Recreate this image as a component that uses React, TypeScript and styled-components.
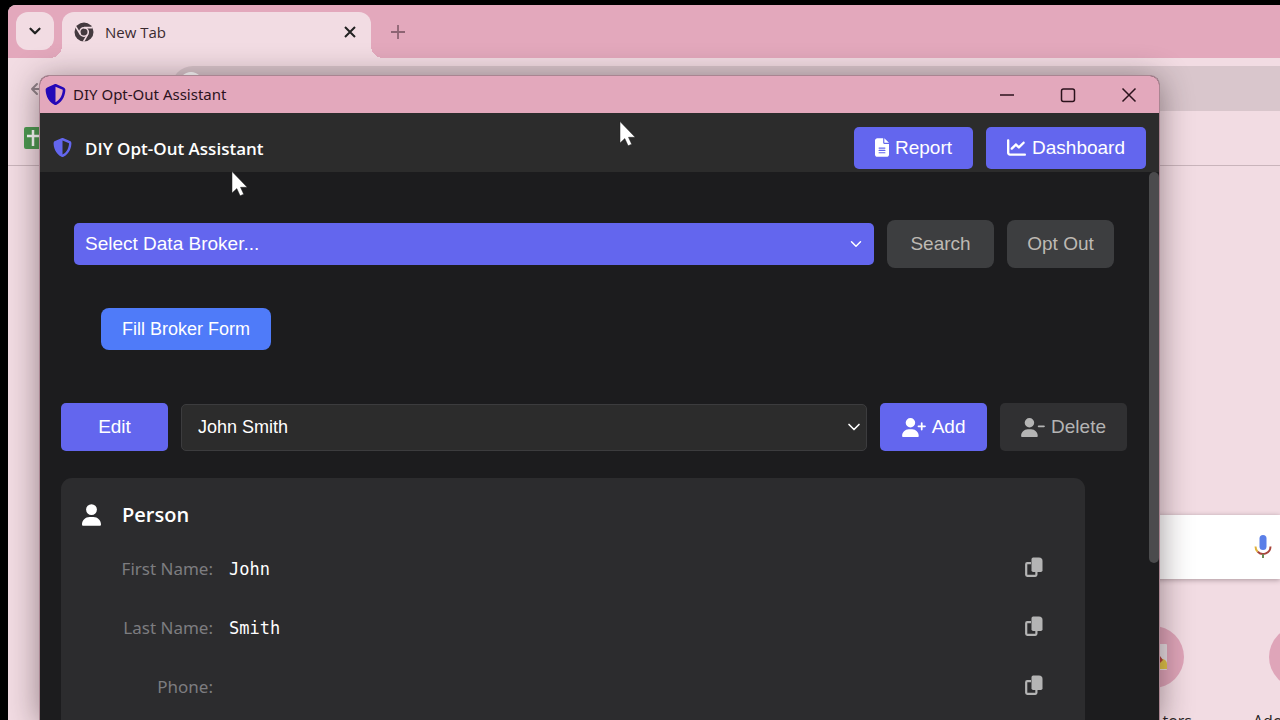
import React from "react";
import styled, { createGlobalStyle } from "styled-components";
import {
  FaArrowLeft,
  FaChartLine,
  FaFileLines,
  FaShieldHalved,
  FaUser,
  FaUserMinus,
  FaUserPlus,
} from "react-icons/fa6";
import { ChevronDown } from "lucide-react";

const uiFont = `"Segoe UI", "Open Sans", "Noto Sans", sans-serif`;
const labelFont = `"Segoe UI", "Noto Sans", "Open Sans", sans-serif`;
const controlFont = `Arial, "Liberation Sans", sans-serif`;
const monoFont = `Consolas, "DejaVu Sans Mono", monospace`;

const GlobalStyle = createGlobalStyle`
  *, *::before, *::after { box-sizing: border-box; }
  body { margin: 0; background: #000; font-family: ${uiFont}; overflow: hidden; }
  button, select { font: inherit; }
  h1, h2, dl, dd { margin: 0; }
`;

const Desktop = styled.div`
  position: relative;
  height: 100vh;
  background: #000;
  overflow: hidden;
`;

/* ---------- browser behind ---------- */

const BrowserWindow = styled.section`
  position: absolute;
  inset: 5px 0 0 8px;
  display: flex;
  flex-direction: column;
  background: #f2dce3;
  border-radius: 8px 0 0 0;
  overflow: hidden;
`;

const TabStrip = styled.div`
  display: flex;
  align-items: flex-end;
  height: 53px;
  flex: none;
  padding-left: 8px;
  background: #e3a8bc;
`;

const TabSearch = styled.button`
  display: grid;
  place-items: center;
  width: 38px;
  height: 38px;
  margin-bottom: 8px;
  padding: 0;
  border: 0;
  border-radius: 12px;
  background: #f2dce3;
  color: #222;
`;

const Tab = styled.div`
  position: relative;
  display: flex;
  align-items: center;
  gap: 11px;
  width: 309px;
  height: 46px;
  margin-left: 8px;
  padding: 0 12px 6px;
  border-radius: 12px 12px 0 0;
  background: #f2dce3;
  color: #3a2a30;
  font-size: 15px;
  line-height: 20px;

  &::before,
  &::after {
    content: "";
    position: absolute;
    bottom: 0;
    width: 12px;
    height: 12px;
  }
  &::before {
    right: 100%;
    background: radial-gradient(circle at 0 0, #e3a8bc 12px, #f2dce3 12px);
  }
  &::after {
    left: 100%;
    background: radial-gradient(circle at 100% 0, #e3a8bc 12px, #f2dce3 12px);
  }
`;

const TabLabel = styled.span`
  flex: 1;
`;

const BareButton = styled.button`
  display: grid;
  place-items: center;
  padding: 0;
  border: 0;
  background: none;
  color: inherit;
`;

const NewTab = styled(BareButton)`
  height: 53px;
  margin-left: 19px;
  color: #8d6473;
`;

const Toolbar = styled.div`
  display: flex;
  align-items: flex-start;
  height: 53px;
  flex: none;
  padding: 8px 0 0 22px;
  color: #8f8288;
`;

const BackButton = styled(BareButton)`
  width: 16px;
  margin: 15px 125px 0 0;
`;

const Omnibox = styled.div`
  flex: 1;
  height: 45px;
  padding: 6px 8px;
  border-radius: 22px 0 0 22px;
  background: #d9c6cc;
`;

const OmniboxBadge = styled.div`
  width: 24px;
  height: 24px;
  border-radius: 50%;
  background: #fff;
`;

const BookmarkBar = styled.div`
  display: flex;
  align-items: center;
  height: 55px;
  flex: none;
  padding-left: 16px;
  border-bottom: 1px solid #c9b4bb;
`;

const NewTabPage = styled.div`
  display: flex;
  flex-direction: column;
  align-items: flex-end;
  padding-top: 349px;
`;

const SearchBox = styled.div`
  display: flex;
  align-items: center;
  justify-content: flex-end;
  width: 60%;
  height: 64px;
  flex: none;
  padding-right: 8px;
  background: #fff;
  box-shadow: 0 1px 5px rgba(60, 40, 48, 0.4);
`;

const Shortcuts = styled.div`
  display: flex;
  gap: 85px;
  margin: 47px -51px 0 0;
`;

const Shortcut = styled.a`
  display: flex;
  flex-direction: column;
  gap: 23px;
  width: 62px;
  color: #2a1f24;
  font-size: 16px;
  line-height: 20px;
  text-decoration: none;
  white-space: nowrap;
`;

const ShortcutDisc = styled.span`
  display: grid;
  place-items: center;
  width: 62px;
  height: 62px;
  border-radius: 50%;
  background: #dfa5b9;
`;

const ShortcutLabel = styled.span<{ $side: "start" | "end" }>`
  align-self: ${(p) => (p.$side === "end" ? "flex-end" : "flex-start")};
  margin: 0 ${(p) => (p.$side === "end" ? "-8px" : "0")} 0
    ${(p) => (p.$side === "end" ? "0" : "-16px")};
`;

/* ---------- assistant window ---------- */

const AppWindow = styled.section`
  position: absolute;
  inset: 75px 120px 0 39px;
  display: flex;
  flex-direction: column;
  border: solid #a98591;
  border-width: 1px 1px 0;
  border-radius: 10px 10px 0 0;
  background: #1c1c1e;
  box-shadow: 0 4px 32px rgba(30, 15, 20, 0.45);
  overflow: hidden;
`;

const TitleBar = styled.div`
  display: flex;
  align-items: center;
  gap: 7px;
  height: 37px;
  flex: none;
  padding: 0 20px 0 5px;
  background: #e3a8bc;
  color: #2b121c;
  font-family: ${labelFont};
  font-size: 15px;
  line-height: 20px;
`;

const WindowTitle = styled.span`
  flex: 1;
  padding-bottom: 2px;
`;

const WindowButtons = styled.div`
  display: flex;
  gap: 41px;
`;

const Header = styled.header`
  display: flex;
  align-items: center;
  gap: 13px;
  height: 59px;
  flex: none;
  padding: 10px 13px 0;
  background: #2c2c2c;
  color: #fff;
`;

const Brand = styled.h1`
  flex: 1;
  padding-top: 2px;
  font-size: 17px;
  line-height: 24px;
  font-weight: 600;
`;

type Tone = "primary" | "bright" | "muted" | "dim";

const tones: Record<Tone, string> = {
  primary: "background: #6366ee; color: #fff;",
  bright: "background: #4f7bf9; color: #fff;",
  muted: "background: #3d3e40; color: #bdb9b3;",
  dim: "background: #303032; color: #b4b4b4;",
};

const Button = styled.button<{
  $tone: Tone;
  $tall?: boolean;
  $round?: boolean;
  $iconWidth?: number;
}>`
  display: inline-flex;
  align-items: center;
  justify-content: center;
  gap: 6px;
  flex: none;
  height: ${(p) => (p.$tall ? 48 : 42)}px;
  min-width: 107px;
  padding: 0 ${(p) => (p.$iconWidth ? 21 : 20)}px;
  border: 0;
  border-radius: ${(p) => (p.$round ? 8 : 5)}px;
  font-family: ${controlFont};
  font-size: ${(p) => (p.$tone === "bright" ? 18 : 19)}px;
  line-height: 24px;
  white-space: nowrap;
  ${(p) => tones[p.$tone]}

  svg {
    width: ${(p) => p.$iconWidth ?? 19}px;
    height: 19px;
  }
`;

const Body = styled.div`
  display: flex;
  flex: 1;
  min-height: 0;
`;

const Content = styled.main`
  flex: 1;
  min-width: 0;
  padding: 48px 22px 0 21px;
`;

const ScrollTrack = styled.div`
  width: 10px;
  flex: none;
`;

const ScrollThumb = styled.div`
  height: 391px;
  border-radius: 5px;
  background: #4b4b4d;
`;

const BrokerRow = styled.div`
  display: flex;
  align-items: center;
  gap: 13px;
  padding: 0 13px;
`;

const FillRow = styled.div`
  padding: 40px 0 53px 40px;
  display: flex;
`;

const ProfileRow = styled.div`
  display: flex;
  align-items: center;
  gap: 13px;
`;

const SelectWrap = styled.div<{ $inset: number }>`
  position: relative;
  flex: 1;
  color: #fff;
  svg {
    position: absolute;
    right: ${(p) => p.$inset}px;
    top: 0;
    bottom: 0;
    margin: auto 0;
    pointer-events: none;
  }
`;

const Select = styled.select<{ $filled?: boolean }>`
  display: block;
  width: 100%;
  height: ${(p) => (p.$filled ? 42 : 47)}px;
  padding: 0 ${(p) => (p.$filled ? 11 : 16)}px;
  appearance: none;
  border: ${(p) => (p.$filled ? "0" : "1px solid #3c3c3e")};
  border-radius: 5px;
  background: ${(p) => (p.$filled ? "#6366ee" : "#2c2c2c")};
  color: #fff;
  font-family: ${controlFont};
  font-size: ${(p) => (p.$filled ? 19 : 18)}px;
  line-height: 24px;
`;

const Card = styled.section`
  margin: 27px 42px 0 0;
  padding: 22px 42px 40px 21px;
  border-radius: 11px;
  background: #2c2c2e;
`;

const CardTitle = styled.h2`
  display: flex;
  align-items: center;
  gap: 21px;
  color: #fff;
  font-size: 20px;
  line-height: 30px;
  font-weight: 600;

  svg {
    width: 19px;
    height: 22px;
  }
`;

const Fields = styled.dl`
  padding-top: 9px;
`;

const Field = styled.div`
  display: flex;
  align-items: center;
  height: 59px;
`;

const FieldName = styled.dt`
  width: 131px;
  margin-right: 16px;
  color: #7d7d80;
  font-family: ${labelFont};
  font-size: 17px;
  line-height: 24px;
  text-align: right;
  white-space: nowrap;
`;

const FieldValue = styled.dd`
  flex: 1;
  color: #fff;
  font-family: ${monoFont};
  font-size: 17px;
  line-height: 24px;
`;

const CopyButton = styled(BareButton)`
  margin-bottom: 4px;
  color: #b4b4b4;
`;

const Pointer = styled.svg<{ $x: number; $y: number }>`
  position: absolute;
  left: ${(p) => p.$x}px;
  top: ${(p) => p.$y}px;
  pointer-events: none;
`;

const ChromeMark = () => (
  <svg width="20" height="20" viewBox="0 0 20 20" aria-hidden="true">
    <circle cx="10" cy="10" r="9.5" fill="#443a3f" />
    <circle cx="10" cy="10" r="4.3" fill="none" stroke="#f2dce3" strokeWidth="1.6" />
    <path d="M10 5.6H18.6M6.2 12.2 1.9 4.8M13.8 12.2 9.5 19.6" stroke="#f2dce3" strokeWidth="1.6" />
  </svg>
);

const CopyIcon = () => (
  <svg width="18" height="20" viewBox="0 0 18 20" aria-hidden="true">
    <path d="M6 6.2H2.2a1 1 0 0 0-1 1v10.6a1 1 0 0 0 1 1h8.2a1 1 0 0 0 1-1V14.5" fill="none" stroke="currentColor" strokeWidth="2.2" />
    <path d="M8.200.5h5.800a3.500 3.500 0 0 1 3.500 3.500v9.300a1.700 1.700 0 0 1-1.700 1.700H8.200a1.700 1.700 0 0 1-1.700-1.700V2.200A1.700 1.700 0 0 1 8.200.5z" fill="currentColor" />
  </svg>
);

const MicIcon = () => (
  <svg width="18" height="26" viewBox="0 0 18 26" aria-hidden="true">
    <rect x="5.500" y="1" width="7" height="15" rx="3.500" fill="#5b7fe8" />
    <path d="M1.500 12.500a7.500 7.500 0 0 0 2.200 5.300" fill="none" stroke="#e0b23c" strokeWidth="2" />
    <path d="M3.700 17.800a7.500 7.500 0 0 0 12.800-5.300" fill="none" stroke="#a8453c" strokeWidth="2" />
    <path d="M9 20v4" stroke="#6d8b55" strokeWidth="2" />
  </svg>
);

const SheetIcon = () => (
  <svg width="22" height="22" viewBox="0 0 22 22" aria-hidden="true">
    <rect width="22" height="22" rx="2" fill="#4c9a51" />
    <path d="M9 3v16M3 9h16" stroke="#fff" strokeWidth="2.500" />
  </svg>
);

const StoreIcon = () => (
  <svg width="32" height="32" viewBox="0 0 32 32" aria-hidden="true">
    <rect x="4" y="3" width="26" height="26" rx="1" fill="#e8dfe3" />
    <path d="M4 18h21a5 5 0 0 1 5 5v5H4z" fill="#e2c548" />
    <path d="M4 15h19l3 4-3 3H4z" fill="#b3433a" />
  </svg>
);

const CursorArrow = ({ x, y }: { x: number; y: number }) => (
  <Pointer $x={x} $y={y} width="18" height="26" viewBox="0 0 18 26" aria-hidden="true">
    <path d="M1 .5v21.500l4.800-4.400 3.300 7.200 3.600-1.600-3.200-6.900h6.700z" fill="#fff" stroke="#222" strokeWidth="0.500" />
  </Pointer>
);

const fields = [
  { name: "First Name:", value: "John" },
  { name: "Last Name:", value: "Smith" },
  { name: "Phone:", value: "" },
];

export default function App() {
  return (
    <Desktop>
      <GlobalStyle />
      <BrowserWindow aria-label="Browser">
        <TabStrip>
          <TabSearch aria-label="Search tabs">
            <ChevronDown size={18} strokeWidth={3} />
          </TabSearch>
          <Tab>
            <ChromeMark />
            <TabLabel>New Tab</TabLabel>
            <BareButton aria-label="Close tab">
              <svg width="18" height="18" viewBox="0 0 18 18">
                <path d="M4 4l10 10M14 4l-10 10" stroke="#222" strokeWidth="2" />
              </svg>
            </BareButton>
          </Tab>
          <NewTab aria-label="New tab">
            <svg width="16" height="16" viewBox="0 0 16 16">
              <path d="M8 1v14M1 8h14" stroke="currentColor" strokeWidth="1.800" />
            </svg>
          </NewTab>
        </TabStrip>
        <Toolbar>
          <BackButton aria-label="Back">
            <FaArrowLeft size={16} />
          </BackButton>
          <Omnibox>
            <OmniboxBadge />
          </Omnibox>
        </Toolbar>
        <BookmarkBar>
          <SheetIcon />
        </BookmarkBar>
        <NewTabPage>
          <SearchBox>
            <BareButton aria-label="Search by voice">
              <MicIcon />
            </BareButton>
          </SearchBox>
          <Shortcuts>
            <Shortcut href="#">
              <ShortcutDisc>
                <StoreIcon />
              </ShortcutDisc>
              <ShortcutLabel $side="end">tors</ShortcutLabel>
            </Shortcut>
            <Shortcut href="#">
              <ShortcutDisc />
              <ShortcutLabel $side="start">Ado</ShortcutLabel>
            </Shortcut>
          </Shortcuts>
        </NewTabPage>
      </BrowserWindow>

      <AppWindow aria-label="DIY Opt-Out Assistant">
        <TitleBar>
          <FaShieldHalved size={21} color="#2408b8" />
          <WindowTitle>DIY Opt-Out Assistant</WindowTitle>
          <WindowButtons>
            <BareButton aria-label="Minimize">
              <svg width="20" height="20" viewBox="0 0 20 20">
                <path d="M3 10h14" stroke="currentColor" strokeWidth="1.500" />
              </svg>
            </BareButton>
            <BareButton aria-label="Maximize">
              <svg width="20" height="20" viewBox="0 0 20 20">
                <rect x="3.500" y="4" width="13" height="12.500" rx="2" fill="none" stroke="currentColor" strokeWidth="1.500" />
              </svg>
            </BareButton>
            <BareButton aria-label="Close">
              <svg width="20" height="20" viewBox="0 0 20 20">
                <path d="M3.500 3.500l13 13M16.500 3.500l-13 13" stroke="currentColor" strokeWidth="1.500" />
              </svg>
            </BareButton>
          </WindowButtons>
        </TitleBar>
        <Header>
          <FaShieldHalved size={19} color="#6366ee" />
          <Brand>DIY Opt-Out Assistant</Brand>
          <Button $tone="primary" $iconWidth={14}>
            <FaFileLines />
            Report
          </Button>
          <Button $tone="primary" $iconWidth={19}>
            <FaChartLine />
            Dashboard
          </Button>
        </Header>
        <Body>
          <Content>
            <BrokerRow>
              <SelectWrap $inset={9}>
                <Select $filled aria-label="Data broker">
                  <option>Select Data Broker...</option>
                </Select>
                <ChevronDown size={18} strokeWidth={2} />
              </SelectWrap>
              <Button $tone="muted" $tall $round>
                Search
              </Button>
              <Button $tone="muted" $tall $round>
                Opt Out
              </Button>
            </BrokerRow>
            <FillRow>
              <Button $tone="bright" $round $iconWidth={18}>
                Fill Broker Form
              </Button>
            </FillRow>
            <ProfileRow>
              <Button $tone="primary" $tall>
                Edit
              </Button>
              <SelectWrap $inset={3}>
                <Select aria-label="Profile">
                  <option>John Smith</option>
                </Select>
                <ChevronDown size={20} strokeWidth={2} />
              </SelectWrap>
              <Button $tone="primary" $tall $iconWidth={24}>
                <FaUserPlus />
                Add
              </Button>
              <Button $tone="dim" $tall $iconWidth={24}>
                <FaUserMinus />
                Delete
              </Button>
            </ProfileRow>
            <Card>
              <CardTitle>
                <FaUser />
                Person
              </CardTitle>
              <Fields>
                {fields.map((f) => (
                  <Field key={f.name}>
                    <FieldName>{f.name}</FieldName>
                    <FieldValue>{f.value}</FieldValue>
                    <CopyButton aria-label={`Copy ${f.name.replace(":", "")}`}>
                      <CopyIcon />
                    </CopyButton>
                  </Field>
                ))}
              </Fields>
            </Card>
          </Content>
          <ScrollTrack>
            <ScrollThumb />
          </ScrollTrack>
        </Body>
      </AppWindow>

      <CursorArrow x={619} y={121} />
      <CursorArrow x={231} y={171} />
    </Desktop>
  );
}
